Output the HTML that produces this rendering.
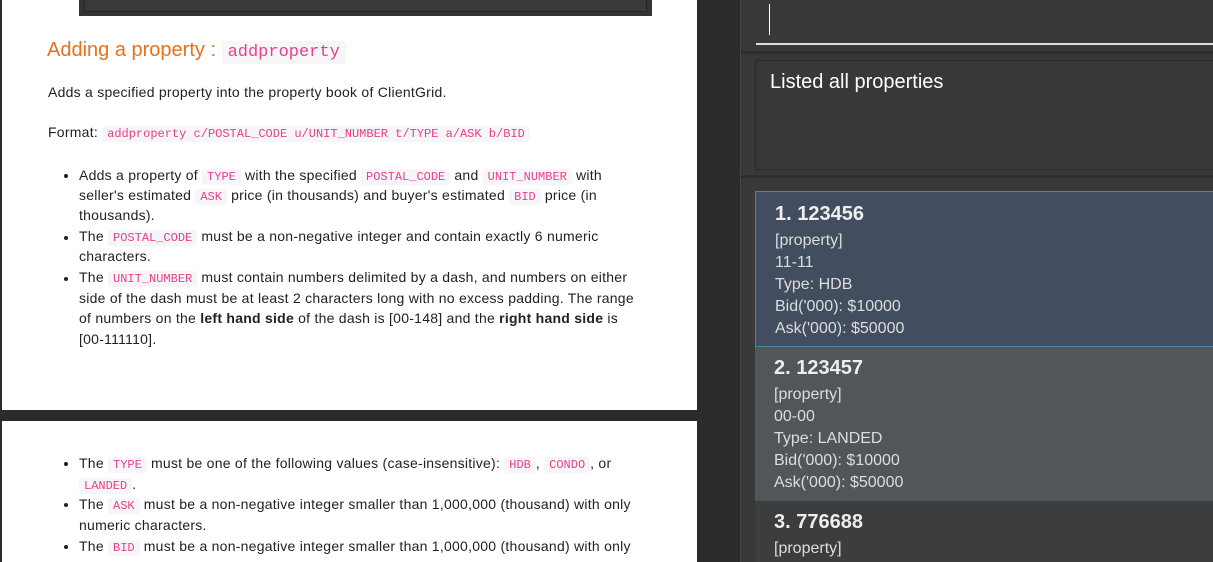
<!DOCTYPE html><html><head><style>
*{margin:0;padding:0;box-sizing:border-box}
body{width:1213px;height:562px;overflow:hidden;background:#2b2b2b;position:relative;font-family:"Liberation Sans",sans-serif}
.pg{position:absolute;background:#fff;left:2px;width:695px}
.l{position:absolute;white-space:nowrap;font-size:14px;color:#222;line-height:20px;letter-spacing:0.25px}
code{font-family:"Liberation Mono",monospace;font-size:12px;color:#e83e8c;background:#f6f6f8;padding:1px 5px;border-radius:3px;letter-spacing:0}
.b{position:absolute;left:62px;width:4px;height:4px;border-radius:2px;background:#222}
.r{position:absolute;color:#fff}
.card{position:absolute;left:755px;width:470px;font-family:"Liberation Sans",sans-serif;color:#e8e8e8}
.card .t{position:absolute;left:19px;font-size:20px;font-weight:bold;color:#eee}
.card .d{position:absolute;left:19px;font-size:16px;line-height:22px;color:#ddd}
</style></head><body>
<div class="pg" style="top:0;height:410px">
 <div style="position:absolute;left:77px;top:0;width:573px;height:16px;background:#333"><div style="position:absolute;left:5px;right:5px;top:0;height:12px;border:1px solid #262626;border-top:none;background:#393939"></div></div>
 <div class="l" style="left:45px;top:36px;font-size:20px;line-height:28px;color:#e8711a;letter-spacing:0">Adding a property : <code style="font-size:17px;padding:2px 6px">addproperty</code></div>
 <div class="l" style="left:46px;top:82px">Adds a specified property into the property book of ClientGrid.</div>
 <div class="l" style="left:46px;top:122px">Format: <code>addproperty c/POSTAL_CODE u/UNIT_NUMBER t/TYPE a/ASK b/BID</code></div>
 <div class="b" style="top:174px"></div>
 <div class="l" style="left:77px;top:165px">Adds a property of <code>TYPE</code> with the specified <code>POSTAL_CODE</code> and <code>UNIT_NUMBER</code> with</div>
 <div class="l" style="left:77px;top:185px">seller's estimated <code>ASK</code> price (in thousands) and buyer's estimated <code>BID</code> price (in</div>
 <div class="l" style="left:77px;top:205px">thousands).</div>
 <div class="b" style="top:236px"></div>
 <div class="l" style="left:77px;top:226px">The <code>POSTAL_CODE</code> must be a non-negative integer and contain exactly 6 numeric</div>
 <div class="l" style="left:77px;top:246px">characters.</div>
 <div class="b" style="top:277px"></div>
 <div class="l" style="left:77px;top:267px">The <code>UNIT_NUMBER</code> must contain numbers delimited by a dash, and numbers on either</div>
 <div class="l" style="left:77px;top:288px">side of the dash must be at least 2 characters long with no excess padding. The range</div>
 <div class="l" style="left:77px;top:308px">of numbers on the <b>left hand side</b> of the dash is [00-148] and the <b>right hand side</b> is</div>
 <div class="l" style="left:77px;top:329px">[00-111110].</div>
</div>
<div class="pg" style="top:421px;height:141px">
 <div class="b" style="top:41px"></div>
 <div class="l" style="left:77px;top:32px">The <code>TYPE</code> must be one of the following values (case-insensitive): <code>HDB</code>, <code>CONDO</code>, or</div>
 <div class="l" style="left:77px;top:53px"><code>LANDED</code>.</div>
 <div class="b" style="top:82px"></div>
 <div class="l" style="left:77px;top:73px">The <code>ASK</code> must be a non-negative integer smaller than 1,000,000 (thousand) with only</div>
 <div class="l" style="left:77px;top:94px">numeric characters.</div>
 <div class="b" style="top:124px"></div>
 <div class="l" style="left:77px;top:115px">The <code>BID</code> must be a non-negative integer smaller than 1,000,000 (thousand) with only</div>
</div>
<div style="position:absolute;left:740px;top:0;width:473px;height:562px;background:#383838;border-left:1px solid #444"></div>
<div style="position:absolute;left:741px;top:51px;width:472px;height:3px;background:#2f2f2f"></div>
<div style="position:absolute;left:769px;top:4px;width:1px;height:31px;background:#fff"></div>
<div style="position:absolute;left:756px;top:43px;width:457px;height:2px;background:#ddd"></div>
<div style="position:absolute;left:755px;top:60px;width:470px;height:110px;border:1px solid #2a2a2a;background:#383838"></div>
<div class="r" style="left:770px;top:71px;font-size:20px;color:#fff">Listed all properties</div>
<div style="position:absolute;left:741px;top:175px;width:472px;height:3px;background:#2f2f2f"></div>
<div class="card" style="top:191px;height:156px;background:#424d5f;border:1px solid #3f8c9a">
 <div class="t" style="top:11px">1. 123456</div>
 <div class="d" style="top:38px">[property]<br>11-11<br>Type: HDB<br>Bid('000): $10000<br>Ask('000): $50000</div>
</div>
<div class="card" style="top:347px;height:154px;background:#515658">
 <div class="t" style="left:19px;top:10px">2. 123457</div>
 <div class="d" style="left:19px;top:37px">[property]<br>00-00<br>Type: LANDED<br>Bid('000): $10000<br>Ask('000): $50000</div>
</div>
<div class="card" style="top:501px;height:61px;background:#3c3d3f">
 <div class="t" style="top:10px">3. 776688</div>
 <div class="d" style="top:37px">[property]</div>
</div>
</body></html>
